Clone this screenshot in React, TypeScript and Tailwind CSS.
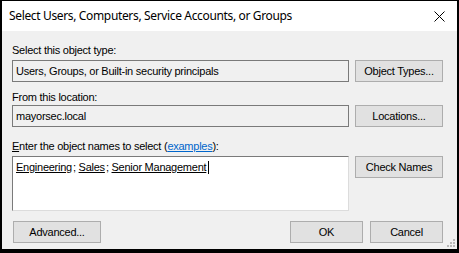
import React from "react";

const body = { fontFamily: '"Liberation Sans", Arial, sans-serif' };
const title = { fontFamily: '"Noto Sans", "Liberation Sans", sans-serif' };

function Btn({ children, className = "" }: { children: React.ReactNode; className?: string }) {
  return (
    <div
      className={`h-[22px] flex items-center justify-center border border-[#adadad] bg-[#e1e1e1] text-[11px] text-black ${className}`}
    >
      {children}
    </div>
  );
}

export default function App() {
  return (
    <div className="w-[459px] h-[253px] bg-black border-t border-l-2 border-r-2 border-b-4 border-black flex flex-col relative" style={body}>
      <div className="h-[30px] bg-white flex items-center justify-between pl-[7px] pr-[12px]">
        <span className="text-[12px] text-black tracking-[-0.35px]" style={title}>
          Select Users, Computers, Service Accounts, or Groups
        </span>
        <svg width="11" height="11" viewBox="0 0 11 11">
          <path d="M0.5 0.5 L10.5 10.5 M10.5 0.5 L0.5 10.5" stroke="#000" strokeWidth="1" />
        </svg>
      </div>
      <div className="flex-1 bg-[#f0f0f0] pl-[10px] pr-[14px] flex flex-col text-[11px] text-black tracking-[-0.25px]">
        <div className="mt-[12px] h-[14px] leading-[14px]">Select this object type:</div>
        <div className="mt-[3px] flex">
          <div className="flex-1 h-[22px] border border-[#7a7a7a] bg-[#f0f0f0] flex items-center pl-[3px]">
            Users, Groups, or Built-in security principals
          </div>
          <Btn className="w-[88px] ml-[6px]">Object Types...</Btn>
        </div>
        <div className="mt-[8px] h-[14px] leading-[14px]">From this location:</div>
        <div className="mt-[1px] flex">
          <div className="flex-1 h-[22px] border border-[#7a7a7a] bg-[#f0f0f0] flex items-center pl-[3px]">
            mayorsec.local
          </div>
          <Btn className="w-[88px] ml-[6px]">Locations...</Btn>
        </div>
        <div className="mt-[12px] h-[14px] leading-[14px]">
          <span className="underline">E</span>nter the object names to select (
          <span className="text-[#0066cc] underline">examples</span>):
        </div>
        <div className="mt-[3px] flex items-start">
          <div className="flex-1 h-[55px] border border-t-[#7a7a7a] border-l-[#7a7a7a] border-r-[#dcdcdc] border-b-[#dcdcdc] bg-white pl-[3px] pt-[2px]">
            <span className="inline-flex items-center h-[14px]">
              <span className="underline">Engineering</span>
              <span className="ml-[1px]">;&nbsp;</span>
              <span className="underline">Sales</span>
              <span className="ml-[1px]">;&nbsp;</span>
              <span className="underline">Senior Management</span>
              <span className="inline-block w-px h-[13px] bg-black ml-[2px]" />
            </span>
          </div>
          <Btn className="w-[88px] ml-[6px]">Check Names</Btn>
        </div>
        <div className="mt-[10px] flex">
          <Btn className="w-[88px] ml-[1px]">Advanced...</Btn>
          <div className="flex-1" />
          <Btn className="w-[73px]">OK</Btn>
          <Btn className="w-[73px] ml-[7px]">Cancel</Btn>
        </div>
      </div>
      <svg className="absolute right-[2px] bottom-[2px]" width="8" height="8" viewBox="0 0 8 8">
        <rect x="6" y="0" width="2" height="2" fill="#b8b8b8" />
        <rect x="3" y="3" width="2" height="2" fill="#b8b8b8" />
        <rect x="6" y="3" width="2" height="2" fill="#b8b8b8" />
        <rect x="0" y="6" width="2" height="2" fill="#b8b8b8" />
        <rect x="3" y="6" width="2" height="2" fill="#b8b8b8" />
        <rect x="6" y="6" width="2" height="2" fill="#b8b8b8" />
      </svg>
    </div>
  );
}
